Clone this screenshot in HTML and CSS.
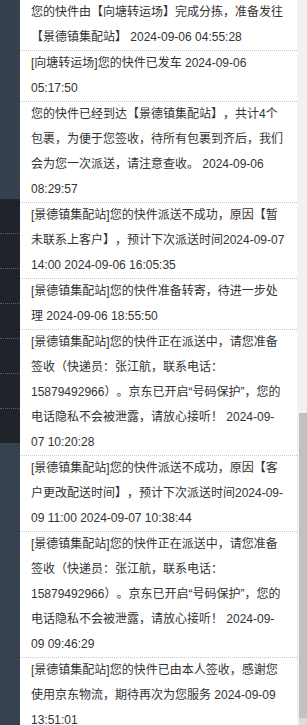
FILE: index.html
```html
<!DOCTYPE html>
<html lang="zh-CN">
<head>
<meta charset="utf-8">
<title>物流跟踪</title>
<link rel="stylesheet" href="styles.css">
</head>
<body>
<div class="screen">
  <aside class="sidebar">
    <div class="side-top"></div>
    <ul class="side-menu">
      <li></li><li></li><li></li><li></li><li></li><li></li><li></li>
    </ul>
    <div class="side-bottom"></div>
  </aside>
  <main class="panel">
    <ul class="track">
      <li>您的快件由【向塘转运场】完成分拣，准备发往【景德镇集配站】 2024-09-06 04:55:28</li>
      <li>[向塘转运场]您的快件已发车 2024-09-06 05:17:50</li>
      <li>您的快件已经到达【景德镇集配站】，共计4个包裹，为便于您签收，待所有包裹到齐后，我们会为您一次派送，请注意查收。 2024-09-06 08:29:57</li>
      <li>[景德镇集配站]您的快件派送不成功，原因【暂未联系上客户】，预计下次派送时间2024-09-07 14:00 2024-09-06 16:05:35</li>
      <li>[景德镇集配站]您的快件准备转寄，待进一步处理 2024-09-06 18:55:50</li>
      <li>[景德镇集配站]您的快件正在派送中，请您准备签收（快递员：张江航，联系电话：15879492966）。京东已开启“号码保护”，您的电话隐私不会被泄露，请放心接听！ 2024-09-07 10:20:28</li>
      <li>[景德镇集配站]您的快件派送不成功，原因【客户更改配送时间】，预计下次派送时间2024-09-09 11:00 2024-09-07 10:38:44</li>
      <li>[景德镇集配站]您的快件正在派送中，请您准备签收（快递员：张江航，联系电话：15879492966）。京东已开启“号码保护”，您的电话隐私不会被泄露，请放心接听！ 2024-09-09 09:46:29</li>
      <li>[景德镇集配站]您的快件已由本人签收，感谢您使用京东物流，期待再次为您服务 2024-09-09 13:51:01</li>
    </ul>
  </main>
  <div class="scrollbar">
    <div class="thumb"></div>
    <div class="arrow"></div>
  </div>
</div>
</body>
</html>
```

FILE: styles.css
```css
html, body {
  margin: 0;
  padding: 0;
  background: #ffffff;
}
.screen {
  display: flex;
  width: 307px;
  height: 725px;
  overflow: hidden;
}
.sidebar {
  width: 20px;
  flex: 0 0 20px;
  display: flex;
  flex-direction: column;
  background: #36414d;
}
.side-top {
  height: 199px;
  background: #36414d;
}
.side-menu {
  list-style: none;
  margin: 0;
  padding: 0;
  height: 244px;
  background: #1f242b;
}
.side-menu li {
  height: 34px;
  border-bottom: 1px dotted #59606a;
}
.side-bottom {
  flex: 1;
  background: #36424f;
}
.panel {
  flex: 0 0 277px;
  width: 277px;
  background: #ffffff;
}
.track {
  list-style: none;
  margin: 0;
  padding: 0;
}
.track li {
  padding: 0 11px 0 11px;
  font-family: "Liberation Sans", "Noto Sans CJK SC", sans-serif;
  font-size: 12px;
  line-height: 25px;
  color: #333333;
  text-spacing-trim: space-all;
  border-bottom: 1px dotted #c8c8c8;
}
.scrollbar {
  flex: 0 0 10px;
  display: flex;
  flex-direction: column;
  background: #f1f1f1;
  padding-top: 413px;
  box-sizing: border-box;
}
.thumb {
  height: 305px;
  margin-left: 2px;
  background: #c1c1c1;
}
.arrow {
  height: 7px;
  margin-left: 2px;
  background: #dcdcdc;
}
```
